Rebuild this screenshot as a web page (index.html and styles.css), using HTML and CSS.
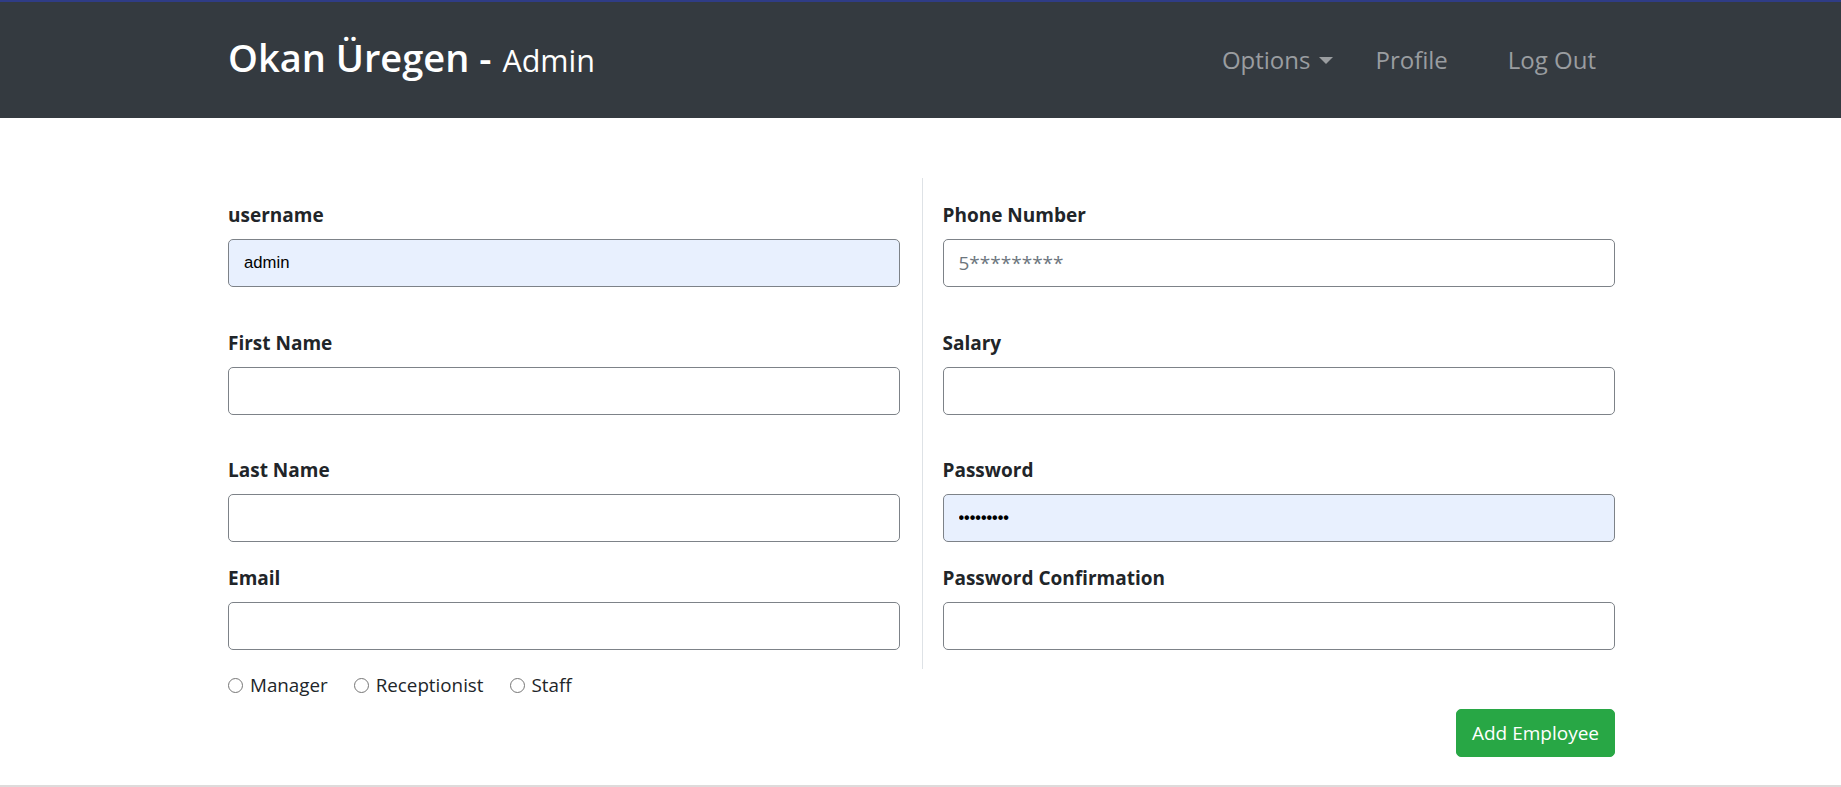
FILE: index.html
```html
<!DOCTYPE html>
<html lang="en">
<head>
<meta charset="utf-8">
<title>Add Employee</title>
<link rel="stylesheet" href="styles.css">
</head>
<body>
<header class="navbar">
  <div class="nav-inner">
    <a class="brand" href="#"><span class="brand-name">Okan Üregen -</span> <span class="brand-role">Admin</span></a>
    <ul class="nav">
      <li class="nav-item"><a class="nav-link dropdown-toggle" href="#">Options</a></li>
      <li class="nav-item nav-profile"><a class="nav-link" href="#">Profile</a></li>
      <li class="nav-item nav-logout"><a class="nav-link" href="#">Log Out</a></li>
    </ul>
  </div>
</header>

<main class="container">
  <form class="employee-form">
    <div class="form-row">
      <div class="col col-left">
        <div class="field gap-1">
          <label class="field-label">username</label>
          <input class="input autofilled" type="text" value="admin">
        </div>
        <div class="field gap-2">
          <label class="field-label">First Name</label>
          <input class="input" type="text">
        </div>
        <div class="field gap-3">
          <label class="field-label">Last Name</label>
          <input class="input" type="text">
        </div>
        <div class="field">
          <label class="field-label">Email</label>
          <input class="input" type="text">
        </div>
      </div>
      <div class="col col-right">
        <div class="field gap-1">
          <label class="field-label">Phone Number</label>
          <input class="input" type="text" placeholder="5*********">
        </div>
        <div class="field gap-2">
          <label class="field-label">Salary</label>
          <input class="input" type="text">
        </div>
        <div class="field gap-3">
          <label class="field-label">Password</label>
          <input class="input autofilled password" type="text" value="•••••••••">
        </div>
        <div class="field">
          <label class="field-label">Password Confirmation</label>
          <input class="input" type="text">
        </div>
      </div>
    </div>

    <div class="roles">
      <label class="role"><input class="radio" type="radio" name="role"><span>Manager</span></label>
      <label class="role"><input class="radio" type="radio" name="role"><span>Receptionist</span></label>
      <label class="role"><input class="radio" type="radio" name="role"><span>Staff</span></label>
    </div>

    <div class="actions">
      <button class="btn-success" type="button">Add Employee</button>
    </div>
  </form>
</main>
<div class="bottom-bar"></div>
</body>
</html>
```

FILE: styles.css
```css
* {
  box-sizing: border-box;
}

html, body {
  margin: 0;
  padding: 0;
}

body {
  font-family: "Open Sans", "Noto Sans", sans-serif;
  font-size: 19px;
  color: #212529;
  background: #ffffff;
  overflow: hidden;
}

/* Navbar */
.navbar {
  background: #343a40;
  border-top: 2px solid #2f3c86;
  height: 118px;
}

.nav-inner {
  height: 100%;
  margin: 0 226px 0 228px;
  padding: 0 19px 5px 0;
  display: flex;
  align-items: center;
  justify-content: space-between;
}

.brand {
  color: #ffffff;
  text-decoration: none;
  white-space: nowrap;
  line-height: 1.2;
}

.brand-name {
  font-size: 38px;
  font-weight: 600;
}

.brand-role {
  font-size: 30.5px;
  font-weight: 400;
  margin-left: 6px;
}

.nav {
  list-style: none;
  margin: 5px 0 0 0;
  padding: 0;
  display: flex;
  align-items: center;
}

.nav-link {
  color: #9a9da0;
  text-decoration: none;
  font-size: 24px;
  line-height: 36px;
  display: flex;
  align-items: center;
}

.dropdown-toggle::after {
  content: "";
  display: inline-block;
  margin-left: 9px;
  border-top: 7px solid #9a9da0;
  border-left: 7px solid transparent;
  border-right: 7px solid transparent;
}

.nav-profile {
  margin-left: 42px;
}

.nav-logout {
  margin-left: 60px;
}

/* Form */
.container {
  margin: 60px 226px 0 228px;
}

.form-row {
  display: grid;
  grid-template-columns: 1fr 1fr;
}

.col {
  padding-top: 21px;
  padding-bottom: 19px;
}

.col-left {
  padding-right: 22px;
}

.col-right {
  border-left: 1px solid #dee2e6;
  padding-left: 20px;
}

.field-label {
  display: block;
  font-weight: 700;
  line-height: 30px;
  padding-top: 1px;
  margin-bottom: 9px;
}

.gap-1 {
  margin-bottom: 40px;
}

.gap-2 {
  margin-bottom: 39px;
}

.gap-3 {
  margin-bottom: 20px;
}

.input {
  display: block;
  width: 100%;
  height: 48px;
  padding: 0 15px;
  border: 1px solid #7d8288;
  border-radius: 5px;
  background: #ffffff;
  font-family: "Open Sans", "Noto Sans", sans-serif;
  font-size: 19px;
  color: #495057;
  outline: none;
}

.input::placeholder {
  color: #6c757d;
}

.autofilled {
  background: #e8f0fe;
  color: #000000;
  font-family: "Liberation Sans", Arial, sans-serif;
  font-size: 16.7px;
}

.password {
  font-size: 16px;
  letter-spacing: 0;
  font-weight: 700;
}

/* Roles */
.roles {
  display: flex;
  align-items: center;
  height: 30px;
  line-height: 30px;
  font-size: 18.8px;
  padding-top: 1px;
}

.role {
  display: flex;
  align-items: center;
  margin-right: 26px;
}

.radio {
  appearance: none;
  -webkit-appearance: none;
  width: 15px;
  height: 15px;
  margin: 1px 7px 0 0;
  border: 1px solid #767676;
  border-radius: 50%;
  background: #ffffff;
}

/* Actions */
.actions {
  display: flex;
  justify-content: flex-end;
  margin-top: 10px;
}

.btn-success {
  background: #28a745;
  color: #ffffff;
  border: 1px solid #28a745;
  border-radius: 5px;
  padding: 8px 15px;
  line-height: 30px;
  font-family: "Open Sans", "Noto Sans", sans-serif;
  font-size: 19px;
  cursor: pointer;
}

.bottom-bar {
  margin-top: 28px;
  height: 4px;
  background: #dedbdb;
}
```
